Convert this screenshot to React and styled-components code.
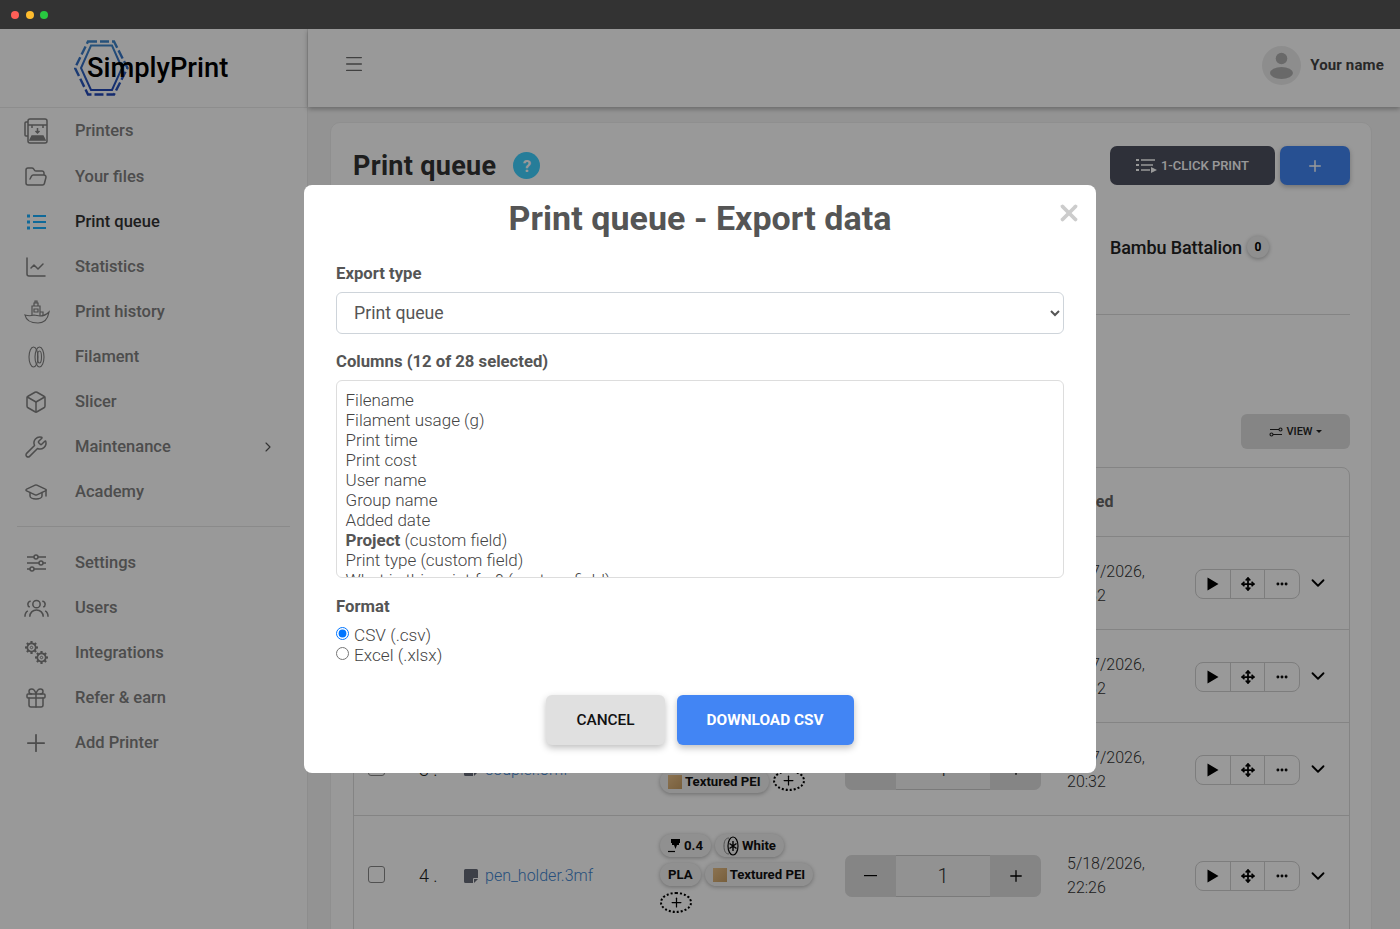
import React from 'react'
import styled, { createGlobalStyle } from 'styled-components'
import {
  Box, ChevronDown, ChevronRight, ChartLine, Ellipsis, FolderOpen, Gift, GraduationCap,
  Menu, Move, Plus, Wrench, X,
} from 'lucide-react'

const GlobalStyle = createGlobalStyle`
  html, body, #root {
    margin: 0;
    height: 100%;
  }
  body {
    font-family: Roboto, "Liberation Sans", sans-serif;
    overflow: hidden;
    background: #333;
  }
  * {
    box-sizing: border-box;
  }
`

const Window = styled.div`
  display: flex;
  flex-direction: column;
  height: 929px;
  overflow: hidden;
`

const TitleBar = styled.div`
  flex: 0 0 29px;
  display: flex;
  align-items: center;
  gap: 6.5px;
  padding: 0 11px;
  background: #333;
`

const Light = styled.span`
  width: 8px;
  height: 8px;
  border-radius: 50%;
  background: ${({ color }) => color};
`

const Viewport = styled.div`
  position: relative;
  flex: 1;
  display: flex;
  overflow: hidden;
  background: #f6f6f6;
`

const Sidebar = styled.aside`
  flex: 0 0 308px;
  background: #fff;
  border-right: 1px solid #ececec;
  display: flex;
  flex-direction: column;
`

const LogoRow = styled.div`
  height: 79px;
  flex: none;
  display: flex;
  align-items: center;
  padding-left: 74px;
  border-bottom: 1px solid #ececec;
`

const LogoMark = styled.div`
  position: relative;
  display: flex;
  align-items: center;
  height: 56px;
  width: 160px;
`

const LogoText = styled.span`
  position: relative;
  margin-left: 13px;
  font-size: 27.3px;
  font-weight: 500;
  color: #000;
`

const LogoHex = styled.svg`
  position: absolute;
  left: 0;
  top: 0;
`

const Nav = styled.nav`
  display: flex;
  flex-direction: column;
  padding: 1px 0 0;
`

const NavItem = styled.a`
  height: 45px;
  display: flex;
  align-items: center;
  padding-left: 24px;
  padding-bottom: ${({ $lift }) => ($lift ? 2 : 0)}px;
  font-size: 16.5px;
  font-weight: 500;
  color: ${({ $active }) => ($active ? '#333' : '#808080')};
`

const NavIcon = styled.span`
  flex: 0 0 51px;
  display: flex;
  align-items: center;
  color: ${({ $active }) => ($active ? '#1ab0ff' : '#808080')};
`

const PlusGlyph = styled.span`
  display: flex;
  margin-left: -2px;
`

const NavCaret = styled.span`
  margin-left: auto;
  margin-right: 31px;
  display: flex;
  color: #555;
`

const NavDivider = styled.hr`
  margin: 12px 17px 12px;
  border: 0;
  border-top: 1px solid #e6e6e6;
`

const Main = styled.div`
  flex: 1;
  min-width: 0;
  display: flex;
  flex-direction: column;
`

const TopBar = styled.header`
  flex: 0 0 78px;
  display: flex;
  align-items: center;
  justify-content: space-between;
  padding: 0 16px 6px 35px;
  background: #fff;
  box-shadow: 0 2px 5px rgba(0, 0, 0, 0.3);
  position: relative;
`

const HamburgerIcon = styled.span`
  display: flex;
  margin-top: -2px;
  color: #6b6b6b;
`

const UserBox = styled.div`
  display: flex;
  align-items: center;
  gap: 9px;
  font-size: 15px;
  font-weight: 700;
  letter-spacing: 0.15px;
  color: #444;
`

const Content = styled.main`
  flex: 1;
  padding: 15px 28px 0 22px;
  overflow: hidden;
`

const Card = styled.section`
  background: #fff;
  border: 1px solid #eee;
  border-radius: 10px;
  padding: 23px 21px 0 22px;
  height: 900px;
`

const CardHead = styled.div`
  display: flex;
  align-items: center;
  height: 39px;
`

const PageTitle = styled.h1`
  margin: 0;
  font-size: 27px;
  font-weight: 700;
  letter-spacing: 0.3px;
  color: #333;
`

const HelpDot = styled.span`
  margin-left: 17px;
  width: 27px;
  height: 27px;
  border-radius: 50%;
  background: #40d0ff;
  color: #fff;
  font-size: 17px;
  font-weight: 700;
  display: flex;
  align-items: center;
  justify-content: center;
`

const HeadButtons = styled.div`
  margin-left: auto;
  display: flex;
  gap: 5px;
`

const OneClick = styled.button`
  width: 165px;
  height: 39px;
  border: 0;
  border-radius: 7px;
  background: #4d505f;
  color: #fff;
  font: 500 13px Roboto, sans-serif;
  display: flex;
  align-items: center;
  justify-content: center;
  gap: 4px;
`

const AddButton = styled.button`
  width: 70px;
  height: 39px;
  border: 0;
  border-radius: 7px;
  background: #4285f4;
  color: #fff;
  display: flex;
  align-items: center;
  justify-content: center;
  box-shadow: 0 2px 5px rgba(0, 0, 0, 0.25);
`

const GroupTabs = styled.div`
  height: 130px;
  padding-top: 50px;
  border-bottom: 1px solid #dcdcdc;
  display: flex;
  justify-content: flex-end;
`

const GroupTab = styled.div`
  width: 240px;
  height: 24px;
  display: flex;
  align-items: center;
  gap: 5px;
  font-size: 18px;
  font-weight: 500;
  letter-spacing: -0.1px;
  color: #222;
`

const GroupBadge = styled.span`
  width: 22px;
  height: 22px;
  border-radius: 50%;
  background: #eee;
  color: #000;
  font-size: 12px;
  font-weight: 700;
  display: flex;
  align-items: center;
  justify-content: center;
  box-shadow: 0 1px 4px rgba(0, 0, 0, 0.3);
`

const ViewRow = styled.div`
  display: flex;
  justify-content: flex-end;
  padding: 99px 0 18px;
`

const ViewButton = styled.button`
  width: 109px;
  height: 35px;
  border: 0;
  border-radius: 6px;
  background: #dedede;
  color: #222;
  font: 500 11px Roboto, sans-serif;
  display: flex;
  align-items: center;
  justify-content: center;
  gap: 3px;
`

const Caret = styled.span`
  width: 0;
  height: 0;
  border-left: 3px solid transparent;
  border-right: 3px solid transparent;
  border-top: 3px solid #222;
`

const Table = styled.div`
  border: 1px solid #dcdcdc;
  border-radius: 8px;
`

const Row = styled.div`
  display: grid;
  grid-template-columns: 51px 45px 196px 185px 222px 128px 105px 1fr;
  align-items: center;
  padding-left: 14px;
  min-height: ${({ $height }) => $height}px;
  border-bottom: 1px solid #dcdcdc;
`

const HeadCell = styled.div`
  grid-column: ${({ $col }) => $col};
  margin-top: -2px;
  font-size: 16px;
  font-weight: 700;
  color: #666;
`

const RowCheck = styled.span`
  width: 17px;
  height: 17px;
  margin-top: -3px;
  border: 1px solid #888;
  border-radius: 3px;
  background: #fff;
`

const RowNumber = styled.span`
  font-size: 18px;
  font-weight: 300;
  color: #222;
`

const FileCell = styled.div`
  display: flex;
  align-items: center;
  gap: 7px;
  font-size: 16px;
  font-weight: 300;
  color: #4285d0;
`

const Chips = styled.div`
  display: flex;
  flex-wrap: wrap;
  gap: 6px 4px;
  width: 160px;
  padding: 18px 0 22px;
`

const Chip = styled.span`
  height: 23px;
  padding: 0 8px;
  display: inline-flex;
  align-items: center;
  gap: 3px;
  border-radius: 12px;
  background: #f0f0f0;
  color: #111;
  font-size: 13.2px;
  font-weight: 700;
  box-shadow: 0 1px 4px rgba(0, 0, 0, 0.3);
`

const Swatch = styled.span`
  width: 14px;
  height: 14px;
  background: linear-gradient(135deg, #e8c088, #c89e64);
`

const AddChip = styled.span`
  width: 32px;
  height: 21px;
  border: 2px dotted #000;
  border-radius: 50%;
  display: inline-flex;
  align-items: center;
  justify-content: center;
`

const Stepper = styled.div`
  width: 196px;
  height: 42px;
  display: flex;
  border-radius: 7px;
  overflow: hidden;
  background: #f4f4f4;
`

const StepButton = styled.span`
  flex: 0 0 51px;
  display: flex;
  align-items: center;
  justify-content: center;
  background: #dedede;
  color: #000;
`

const StepValue = styled.span`
  flex: 1;
  display: flex;
  align-items: center;
  justify-content: center;
  font-size: 20px;
  font-weight: 300;
  color: #333;
  border: 1px solid #ccc;
  border-width: 1px 0;
`

const DateCell = styled.div`
  padding-top: 1px;
  font-size: 16px;
  font-weight: 300;
  line-height: 24px;
  color: #333;
`

const ActionGroup = styled.div`
  display: flex;
  width: 105px;
  height: 30px;
  margin-top: 1px;
  border: 1px solid #d0d0d0;
  border-radius: 8px;
  background: #fff;
`

const ActionCell = styled.span`
  flex: 1;
  display: flex;
  align-items: center;
  justify-content: center;
  color: #000;
  & + & {
    border-left: 1px solid #d0d0d0;
  }
`

const RowChevron = styled.span`
  padding-left: 7px;
  display: flex;
  color: #000;
`

const Backdrop = styled.div`
  position: absolute;
  inset: 0;
  background: rgba(0, 0, 0, 0.4);
  display: flex;
  align-items: center;
  justify-content: center;
`

const Modal = styled.div`
  position: relative;
  width: 792px;
  height: 588px;
  padding: 12px 32px 0;
  background: #fff;
  border-radius: 8px;
  color: #555;
`

const ModalTitle = styled.h2`
  margin: 0 0 23px;
  height: 42px;
  line-height: 42px;
  text-align: center;
  font-size: 34px;
  font-weight: 700;
  letter-spacing: 0.05px;
  color: #555;
`

const CloseButton = styled.span`
  position: absolute;
  top: 15px;
  right: 14px;
  color: #ccc;
  display: flex;
`

const FieldLabel = styled.div`
  font-size: 16.7px;
  font-weight: 700;
  line-height: 24px;
  margin-bottom: 6px;
`

const ExportSelect = styled.select`
  display: block;
  width: 100%;
  height: 42px;
  margin-bottom: 16px;
  padding: 0 8px 0 13px;
  border: 1px solid #ced4da;
  border-radius: 6px;
  background-color: #fff;
  font: 400 17.7px Roboto, sans-serif;
  color: #555;
`

const ColumnList = styled.div`
  height: 198px;
  margin-bottom: 17px;
  padding: 9px 8.5px 0;
  border: 1px solid #ddd;
  border-radius: 6px;
  overflow: hidden;
  font-size: 17px;
  font-weight: 300;
  line-height: 20px;
  color: #444;
`

const ColumnOption = styled.div`
  white-space: nowrap;
`

const ColumnName = styled.b`
  font-weight: 700;
  color: #555;
`

const RadioList = styled.div`
  display: flex;
  flex-direction: column;
`

const RadioRow = styled.label`
  height: 20px;
  display: flex;
  align-items: center;
  gap: 5px;
  font-size: 17.2px;
  font-weight: 300;
  color: #444;
`

const RadioInput = styled.input`
  margin: 0;
  position: relative;
  top: -2px;
`

const ModalButtons = styled.div`
  margin-top: 30px;
  display: flex;
  justify-content: center;
  gap: 12px;
`

const ModalButton = styled.button`
  height: 50px;
  padding: 0 30px;
  border: 0;
  border-radius: 6px;
  background: ${({ $primary }) => ($primary ? '#4285f4' : '#e0e0e0')};
  color: ${({ $primary }) => ($primary ? '#fff' : '#111')};
  font: ${({ $primary }) => ($primary ? 700 : 500)} 15.4px Roboto, sans-serif;
  text-transform: uppercase;
  box-shadow: 0 3px 7px rgba(0, 0, 0, 0.25);
`

const icon = { size: 24, strokeWidth: 1.5 }

const PrinterIcon = () => (
  <svg width="24" height="26" viewBox="0 0 24 26" fill="none" stroke="currentColor" strokeWidth="1.5">
    <rect x="4" y="1" width="19" height="24" rx="2" />
    <path d="M4 4H2a1 1 0 0 0-1 1v12a1 1 0 0 0 1 1h2M4 7h19M8 7v3m11-3v3" />
    <path d="M13.5 10v5M11.5 13l2 2 2-2" />
    <path d="M8 18h11l2 4H6z" fill="currentColor" />
  </svg>
)

const QueueIcon = () => (
  <svg width="24" height="18" viewBox="0 0 24 18" fill="none" stroke="currentColor" strokeWidth="2">
    <path d="M9 3h13M9 9h13M9 15h13" />
    <path d="M3 3h3M3 9h3M3 15h3" strokeWidth="3" />
  </svg>
)

const BoatIcon = () => (
  <svg width="26" height="24" viewBox="0 0 26 24" fill="none" stroke="currentColor" strokeWidth="1.2">
    <path d="M1 15c3 1 6 1 9 0l6 1c3 0 6-1 9-4-1 6-4 11-11 11C7 23 2 20 1 15z" />
    <path d="M8 15V6h8v10M10 6V3h4v3M11 3V1h2v2M10 9v3h4V9zM16 12h3v3" />
  </svg>
)

const FilamentIcon = () => (
  <svg width="22" height="22" viewBox="-3.500 0 22 22" fill="none" stroke="currentColor" strokeWidth="1.1">
    <ellipse cx="6" cy="11" rx="4.5" ry="10" />
    <ellipse cx="12" cy="11" rx="4.5" ry="10" />
    <ellipse cx="12" cy="11" rx="2" ry="6" />
  </svg>
)

const SlidersIcon = () => (
  <svg width="24" height="18" viewBox="0 0 24 18" fill="none" stroke="currentColor" strokeWidth="1.5">
    <path d="M3 3h7m4 0h8M3 9h12m4 0h3M3 15h3m4 0h12" />
    <circle cx="12" cy="3" r="2" />
    <circle cx="17" cy="9" r="2" />
    <circle cx="8" cy="15" r="2" />
  </svg>
)

const PeopleIcon = () => (
  <svg width="25" height="20" viewBox="0 0 26 20" fill="none" stroke="currentColor" strokeWidth="1.6">
    <circle cx="13" cy="6" r="3.8" />
    <path d="M6 19c0-4 3-7 7-7s7 3 7 7" />
    <path d="M6 9c-1.500-.5-2-2-2-3s1-3 3-3M20 9c1.500-.5 2-2 2-3s-1-3-3-3M1 19c0-3 1-5 3-6M25 19c0-3-1-5-3-6" />
  </svg>
)

const gearTeeth = [0, 45, 90, 135, 180, 225, 270, 315]

const Gear = ({ x, y }) => (
  <g transform={`translate(${x} ${y})`}>
    <circle r="4.2" strokeWidth="1.7" />
    <circle r="1.2" strokeWidth="1" />
    {gearTeeth.map(angle => (
      <path key={angle} d="M4 0h2.500" strokeWidth="2.200" transform={`rotate(${angle})`} />
    ))}
  </g>
)

const GearsIcon = () => (
  <svg width="24" height="24" viewBox="0 0 24 24" fill="none" stroke="currentColor">
    <Gear x={7.500} y={6.500} />
    <Gear x={17.500} y={16.500} />
  </svg>
)

const OneClickIcon = () => (
  <svg width="21" height="15" viewBox="0 0 21 15" fill="none" stroke="currentColor" strokeWidth="1.3">
    <path d="M5 2h14M5 7h12M5 12h9" />
    <path d="M0 2h3M0 7h3M0 12h3" strokeWidth="2" />
    <path d="M15 9l6 3-6 3z" fill="currentColor" stroke="none" />
  </svg>
)

const AvatarIcon = () => (
  <svg width="39" height="39" viewBox="0 0 39 39">
    <circle cx="19.5" cy="19.5" r="19.5" fill="#ececec" />
    <circle cx="19.500" cy="12.500" r="5.800" fill="#b0b0b0" />
    <ellipse cx="19.500" cy="27" rx="11.500" ry="6" fill="#b0b0b0" />
  </svg>
)

const SwapIcon = () => (
  <svg width="14" height="10" viewBox="0 0 14 10" fill="none" stroke="currentColor" strokeWidth="1.1">
    <path d="M1 2.500h9M4 7.500h9" />
    <circle cx="11.500" cy="2.500" r="1.500" />
    <circle cx="2.500" cy="7.500" r="1.500" />
  </svg>
)

const FileGlyph = () => (
  <svg width="14" height="14" viewBox="0 0 14 14">
    <path d="M1.500 0h11A1.500 1.500 0 0 1 14 1.500V9h-4a1 1 0 0 0-1 1v4H1.500A1.500 1.500 0 0 1 0 12.500v-11A1.500 1.500 0 0 1 1.500 0z" fill="#666b78" />
    <path d="M10 10h4l-4 4z" fill="#666b78" />
  </svg>
)

const NozzleIcon = () => (
  <svg width="13" height="15" viewBox="0 0 13 15" fill="#000">
    <path d="M3 1h9v4h-1v2H9l-1.500 4L6 7H4V5H3z" />
    <path d="M0 13.500h7" stroke="#000" strokeWidth="1.200" />
  </svg>
)

const SpoolIcon = () => (
  <svg width="16" height="20" viewBox="2 0 16 20" fill="none" stroke="#000">
    <path d="M8 2C4 2 3 6 3 10s1 8 5 8" stroke="#888" strokeWidth="1" />
    <ellipse cx="12" cy="10" rx="5" ry="9" strokeWidth="1.200" />
    <path d="M12 5v10M8.500 7.500l7 5M15.500 7.500l-7 5" strokeWidth="1.400" />
  </svg>
)

const PlayGlyph = () => (
  <svg width="12" height="14" viewBox="0 0 12 14">
    <path d="M0.500 0.500L11.500 7 0.500 13.500z" fill="#000" />
  </svg>
)

const navTop = [
  { label: 'Printers', icon: <PrinterIcon />, lift: true },
  { label: 'Your files', icon: <FolderOpen {...icon} /> },
  { label: 'Print queue', icon: <QueueIcon />, active: true },
  { label: 'Statistics', icon: <ChartLine {...icon} /> },
  { label: 'Print history', icon: <BoatIcon /> },
  { label: 'Filament', icon: <FilamentIcon /> },
  { label: 'Slicer', icon: <Box {...icon} /> },
  { label: 'Maintenance', icon: <Wrench {...icon} />, caret: true },
  { label: 'Academy', icon: <GraduationCap {...icon} /> },
]

const navBottom = [
  { label: 'Settings', icon: <SlidersIcon /> },
  { label: 'Users', icon: <PeopleIcon /> },
  { label: 'Integrations', icon: <GearsIcon /> },
  { label: 'Refer & earn', icon: <Gift {...icon} /> },
  { label: 'Add Printer', icon: <PlusGlyph><Plus size={28} strokeWidth={1.5} /></PlusGlyph> },
]

const rows = [
  { n: 1, file: 'bracket.3mf', date: '5/17/2026,', time: '20:32', height: 93 },
  { n: 2, file: 'hinge.3mf', date: '5/17/2026,', time: '20:32', height: 93 },
  { n: 3, file: 'coupler.3mf', date: '5/17/2026,', time: '20:32', height: 93 },
  { n: 4, file: 'pen_holder.3mf', date: '5/18/2026,', time: '22:26', height: 120, pla: true },
]

const columns = [
  'Filename', 'Filament usage (g)', 'Print time', 'Print cost', 'User name', 'Group name', 'Added date',
]

const NavEntry = ({ item }) => (
  <NavItem $active={item.active} $lift={item.lift}>
    <NavIcon $active={item.active}>{item.icon}</NavIcon>
    {item.label}
    {item.caret && <NavCaret><ChevronRight size={16} strokeWidth={1.7} /></NavCaret>}
  </NavItem>
)

const QueueRow = ({ row }) => (
  <Row $height={row.height}>
    <RowCheck />
    <RowNumber>{row.n} .</RowNumber>
    <FileCell><FileGlyph />{row.file}</FileCell>
    <Chips>
      <Chip><NozzleIcon />0.4</Chip>
      <Chip><SpoolIcon />White</Chip>
      {row.pla && <Chip>PLA</Chip>}
      <Chip><Swatch />Textured PEI</Chip>
      <AddChip><Plus size={15} strokeWidth={2} color="#000" /></AddChip>
    </Chips>
    <Stepper>
      <StepButton><svg width="13" height="2"><rect width="13" height="1.200" fill="#000" /></svg></StepButton>
      <StepValue>1</StepValue>
      <StepButton><Plus size={18} strokeWidth={1.7} /></StepButton>
    </Stepper>
    <DateCell>{row.date}<br />{row.time}</DateCell>
    <ActionGroup>
      <ActionCell><PlayGlyph /></ActionCell>
      <ActionCell><Move size={14} strokeWidth={3} /></ActionCell>
      <ActionCell><Ellipsis size={14} strokeWidth={3} /></ActionCell>
    </ActionGroup>
    <RowChevron><ChevronDown size={22} strokeWidth={2} /></RowChevron>
  </Row>
)

const App = () => (
  <Window>
    <GlobalStyle />
    <TitleBar>
      <Light color="#ff5f57" />
      <Light color="#febc2e" />
      <Light color="#28c840" />
    </TitleBar>
    <Viewport>
      <Sidebar>
        <LogoRow>
          <LogoMark>
            <LogoHex width="55" height="56" viewBox="0 0 55 56" fill="none">
              <defs>
                <linearGradient id="hex" x1="0" y1="0" x2="0" y2="1">
                  <stop offset="0" stopColor="#3f88cc" />
                  <stop offset="1" stopColor="#2248b8" />
                </linearGradient>
              </defs>
              <path d="M14 1.500h26l13.500 26.500L40 54.500H14L1 28z" stroke="url(#hex)" strokeWidth="2.400" strokeDasharray="9 3" />
              <path d="M17 5.500h21L48 28 38 50H17L7 28z" stroke="url(#hex)" strokeWidth="2" />
            </LogoHex>
            <LogoText>SimplyPrint</LogoText>
          </LogoMark>
        </LogoRow>
        <Nav>
          {navTop.map(item => <NavEntry key={item.label} item={item} />)}
        </Nav>
        <NavDivider />
        <Nav>
          {navBottom.map(item => <NavEntry key={item.label} item={item} />)}
        </Nav>
      </Sidebar>
      <Main>
        <TopBar>
          <HamburgerIcon><Menu size={22} strokeWidth={1.5} /></HamburgerIcon>
          <UserBox><AvatarIcon />Your name</UserBox>
        </TopBar>
        <Content>
          <Card>
            <CardHead>
              <PageTitle>Print queue</PageTitle>
              <HelpDot>?</HelpDot>
              <HeadButtons>
                <OneClick><OneClickIcon />1-CLICK PRINT</OneClick>
                <AddButton><Plus size={18} strokeWidth={2} /></AddButton>
              </HeadButtons>
            </CardHead>
            <GroupTabs>
              <GroupTab>Bambu Battalion<GroupBadge>0</GroupBadge></GroupTab>
            </GroupTabs>
            <ViewRow>
              <ViewButton><SwapIcon />VIEW<Caret /></ViewButton>
            </ViewRow>
            <Table>
              <Row $height={69}>
                <HeadCell $col={6}>Added</HeadCell>
              </Row>
              {rows.map(row => <QueueRow key={row.n} row={row} />)}
            </Table>
          </Card>
        </Content>
      </Main>
      <Backdrop>
        <Modal>
          <CloseButton><X size={26} strokeWidth={3.5} /></CloseButton>
          <ModalTitle>Print queue - Export data</ModalTitle>
          <FieldLabel>Export type</FieldLabel>
          <ExportSelect defaultValue="queue">
            <option value="queue">Print queue</option>
          </ExportSelect>
          <FieldLabel>Columns (12 of 28 selected)</FieldLabel>
          <ColumnList>
            {columns.map(name => <ColumnOption key={name}>{name}</ColumnOption>)}
            <ColumnOption><ColumnName>Project</ColumnName> (custom field)</ColumnOption>
            <ColumnOption>Print type (custom field)</ColumnOption>
            <ColumnOption>What is this print for? (custom field)</ColumnOption>
          </ColumnList>
          <FieldLabel>Format</FieldLabel>
          <RadioList>
            <RadioRow><RadioInput type="radio" name="format" defaultChecked />CSV (.csv)</RadioRow>
            <RadioRow><RadioInput type="radio" name="format" />Excel (.xlsx)</RadioRow>
          </RadioList>
          <ModalButtons>
            <ModalButton>Cancel</ModalButton>
            <ModalButton $primary>Download CSV</ModalButton>
          </ModalButtons>
        </Modal>
      </Backdrop>
    </Viewport>
  </Window>
)

export default App
